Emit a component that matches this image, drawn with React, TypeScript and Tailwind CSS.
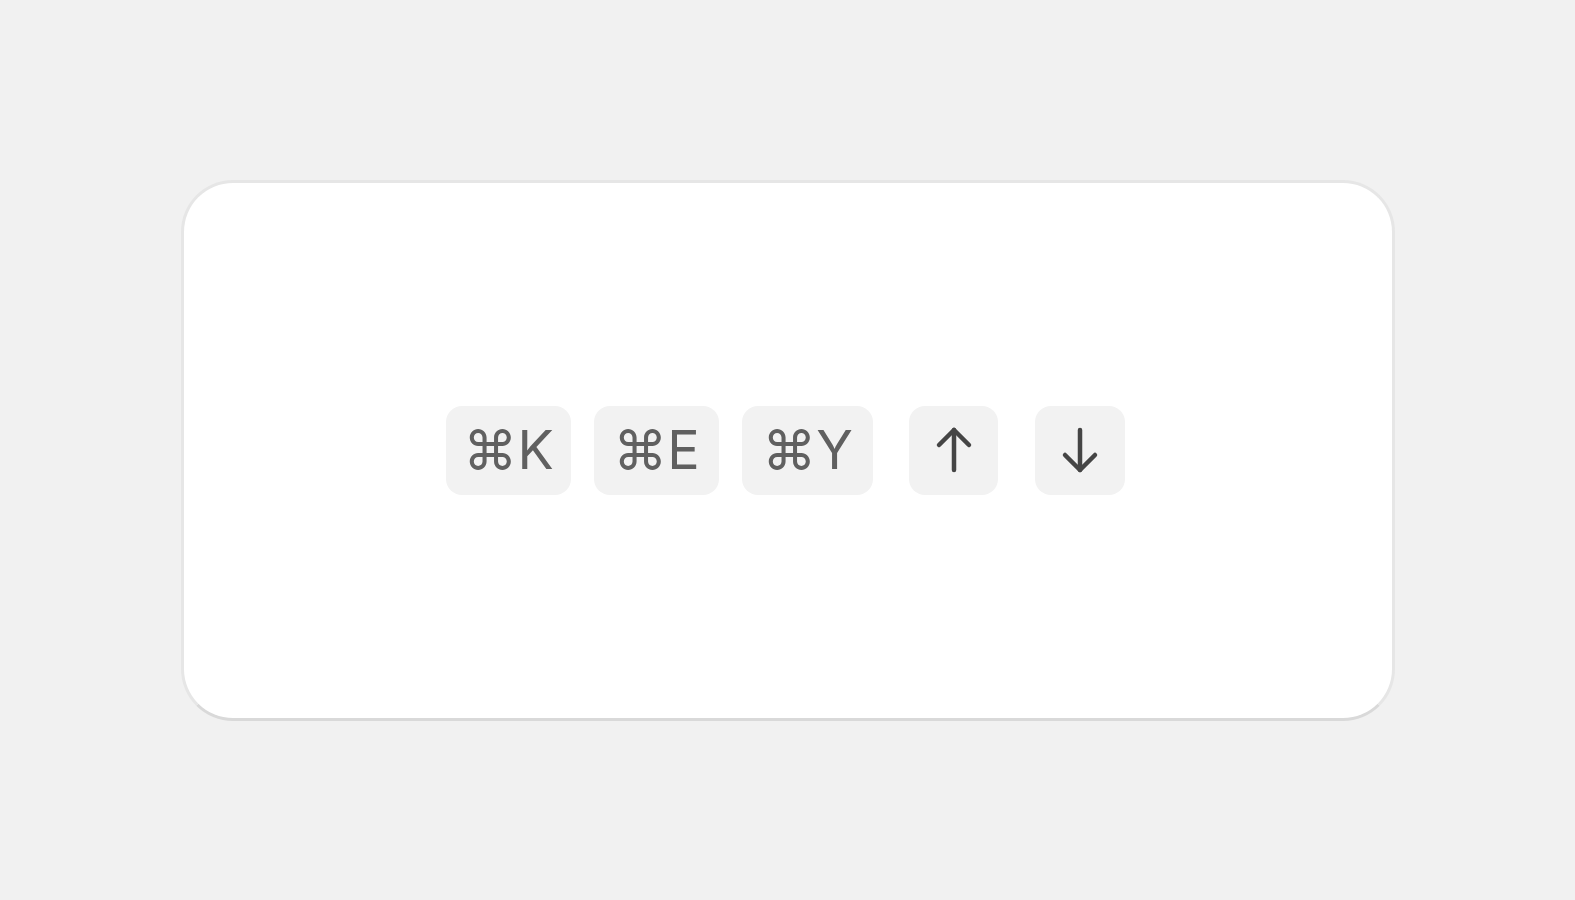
import React from 'react';

function Key({ children, w }: { children: React.ReactNode; w: string }) {
  return (
    <div
      className={`${w} flex h-[89px] items-center justify-center rounded-[16px] bg-[#f2f2f2] text-[54px] leading-none text-[#606060]`}
    >
      {children}
    </div>
  );
}

function Arrow({ down = false }: { down?: boolean }) {
  return (
    <svg width="38" height="48" viewBox="0 0 38 48" fill="none" stroke="#454545" strokeWidth="4.5" strokeLinecap="round" strokeLinejoin="round">
      {down ? (
        <>
          <path d="M19 4v40" />
          <path d="M4 29l15 15 15-15" />
        </>
      ) : (
        <>
          <path d="M19 44V4" />
          <path d="M4 19L19 4l15 15" />
        </>
      )}
    </svg>
  );
}

export default function App() {
  return (
    <div className="flex min-h-screen items-center justify-center bg-[#f1f1f1] font-['Inter','DejaVu_Sans',sans-serif]">
      <div className="flex h-[541px] w-[1214px] items-center justify-center rounded-[52px] border-[3px] border-[#e6e6e6] border-b-[#d9d9d9] bg-white">
        <div className="flex items-center pr-[4px]">
          <Key w="w-[125px]">⌘K</Key>
          <div className="w-[23px]" />
          <Key w="w-[125px]">⌘E</Key>
          <div className="w-[23px]" />
          <Key w="w-[131px]">⌘Y</Key>
          <div className="w-[36px]" />
          <Key w="w-[89px]">
            <Arrow />
          </Key>
          <div className="w-[37px]" />
          <Key w="w-[90px]">
            <Arrow down />
          </Key>
        </div>
      </div>
    </div>
  );
}
